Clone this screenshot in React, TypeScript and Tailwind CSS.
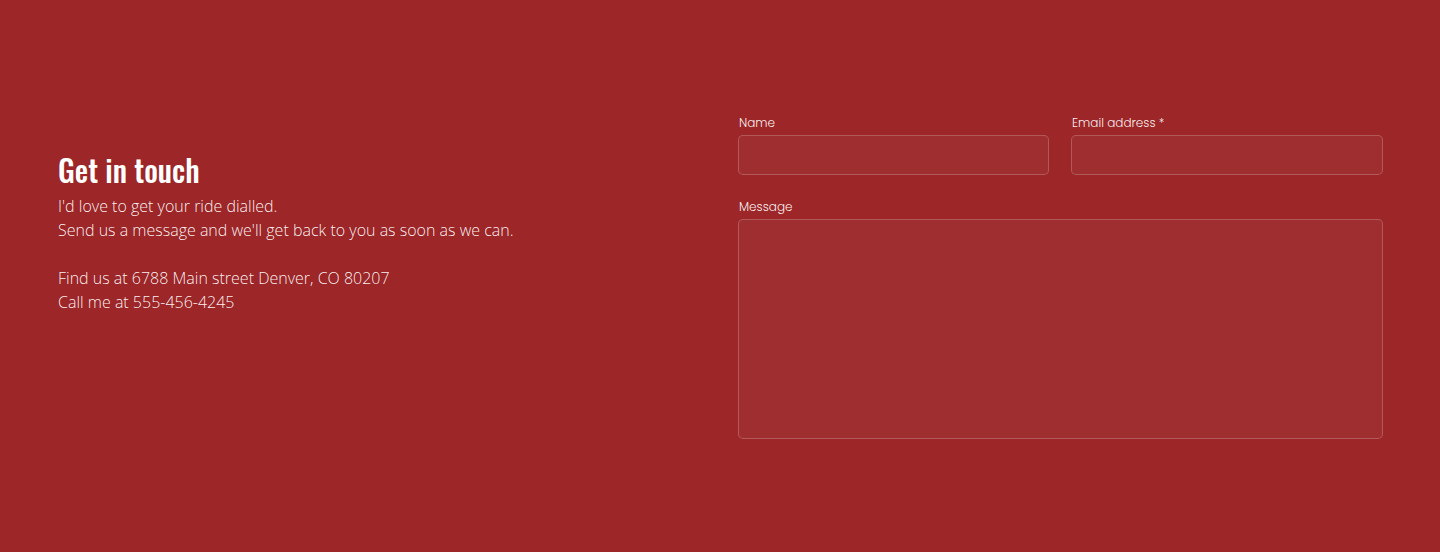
const inputClass =
  "w-full rounded-[5px] border border-white/20 bg-white/[0.04] outline-none text-white px-3";

const labelClass = "block mb-[4px] text-[12px] leading-[16px] text-white/95 font-['Poppins','Inter',sans-serif] font-light";

const App = () => {
  return (
    <div className="w-full h-[552px] bg-[#9c2628] font-['Open_Sans',sans-serif]">
      <div className="grid grid-cols-2 gap-[35px] pl-[58px] pr-[57px] pt-[115px]">
        <div className="pt-[31px] text-white">
          <h2 className="font-['Oswald','Liberation_Sans_Narrow','DejaVu_Sans_Condensed',sans-serif] font-medium text-[30px] leading-[48px]">
            Get in touch
          </h2>
          <div className="font-light text-[16px] leading-[24px] text-white/95">
            <p>I'd love to get your ride dialled.</p>
            <p>Send us a message and we'll get back to you as soon as we can.</p>
            <p className="mt-[24px]">Find us at 6788 Main street Denver, CO 80207</p>
            <p>Call me at 555-456-4245</p>
          </div>
        </div>
        <form className="flex flex-col gap-[24px]">
          <div className="grid grid-cols-[311px_312px] justify-between">
            <label>
              <span className={labelClass + " pl-px"}>Name</span>
              <input type="text" className={inputClass + " h-[40px]"} />
            </label>
            <label>
              <span className={labelClass + " pl-px"}>Email address *</span>
              <input type="email" className={inputClass + " h-[40px]"} />
            </label>
          </div>
          <label>
            <span className={labelClass + " pl-px"}>Message</span>
            <textarea className={inputClass + " h-[220px] resize-none py-2 block"} />
          </label>
        </form>
      </div>
    </div>
  );
};

export default App;
